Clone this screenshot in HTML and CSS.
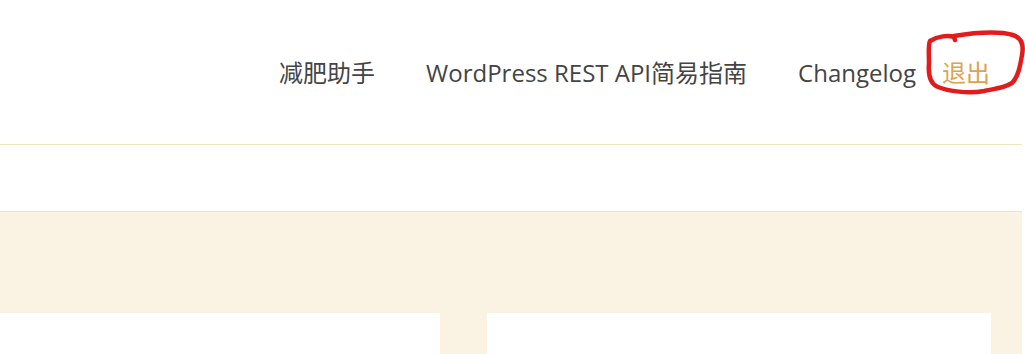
FILE: index.html
```html
<!DOCTYPE html>
<html lang="zh">
<head>
<meta charset="utf-8">
<link rel="stylesheet" href="styles.css">
</head>
<body>
<div class="page">
  <header class="site-header">
    <nav class="menu">
      <a class="menu-item" href="#">减肥助手</a>
      <a class="menu-item" href="#">WordPress REST API简易指南</a>
      <a class="menu-item" href="#">Changelog</a>
      <a class="menu-item logout" href="#">退出</a>
    </nav>
  </header>
  <div class="subbar"></div>
  <main class="content">
    <div class="card card-left"></div>
    <div class="card card-right"></div>
  </main>
  <svg class="scribble" width="110" height="80" viewBox="0 0 110 80">
    <path d="M12 14 C20 9 30 8 36 10 L37 13 L36 9 C55 6 80 4 95 8 C104 11 106 18 104 28 C102 40 100 50 94 56 C84 62 74 62 66 64 C50 67 30 64 20 60 C12 57 10 48 11 36 C11 26 10 18 12 14 Z" fill="none" stroke="#e31b1b" stroke-width="4.5" stroke-linejoin="round" stroke-linecap="round"/>
  </svg>
</div>
</body>
</html>
```

FILE: styles.css
```css
html, body {
  margin: 0;
  padding: 0;
  background: #ffffff;
}
body {
  font-family: "Open Sans", "Noto Sans CJK SC", sans-serif;
  width: 1025px;
  height: 354px;
  overflow: hidden;
}
.page {
  position: relative;
  width: 1022px;
  height: 354px;
  background: #faf3e4;
  border-right: 3px solid #ffffff;
}
.site-header {
  height: 145px;
  background: #ffffff;
  border-bottom: 1px solid #f1e4c3;
  display: flex;
  justify-content: flex-end;
  box-sizing: border-box;
}
.menu {
  display: flex;
  align-items: flex-start;
  padding-top: 56px;
  padding-right: 32px;
}
.menu-item {
  font-size: 24px;
  line-height: 34px;
  color: #444444;
  text-decoration: none;
  margin-left: 51px;
}
.menu-item.logout {
  color: #e0a24d;
  margin-left: 26px;
}
.subbar {
  height: 66px;
  background: #ffffff;
  border-bottom: 1px solid #efe2c2;
}
.content {
  display: flex;
  padding-top: 101px;
}
.card {
  background: #ffffff;
  height: 41px;
}
.card-left {
  width: 440px;
}
.card-right {
  width: 504px;
  margin-left: 47px;
}
.scribble {
  position: absolute;
  left: 918px;
  top: 27px;
}
```
